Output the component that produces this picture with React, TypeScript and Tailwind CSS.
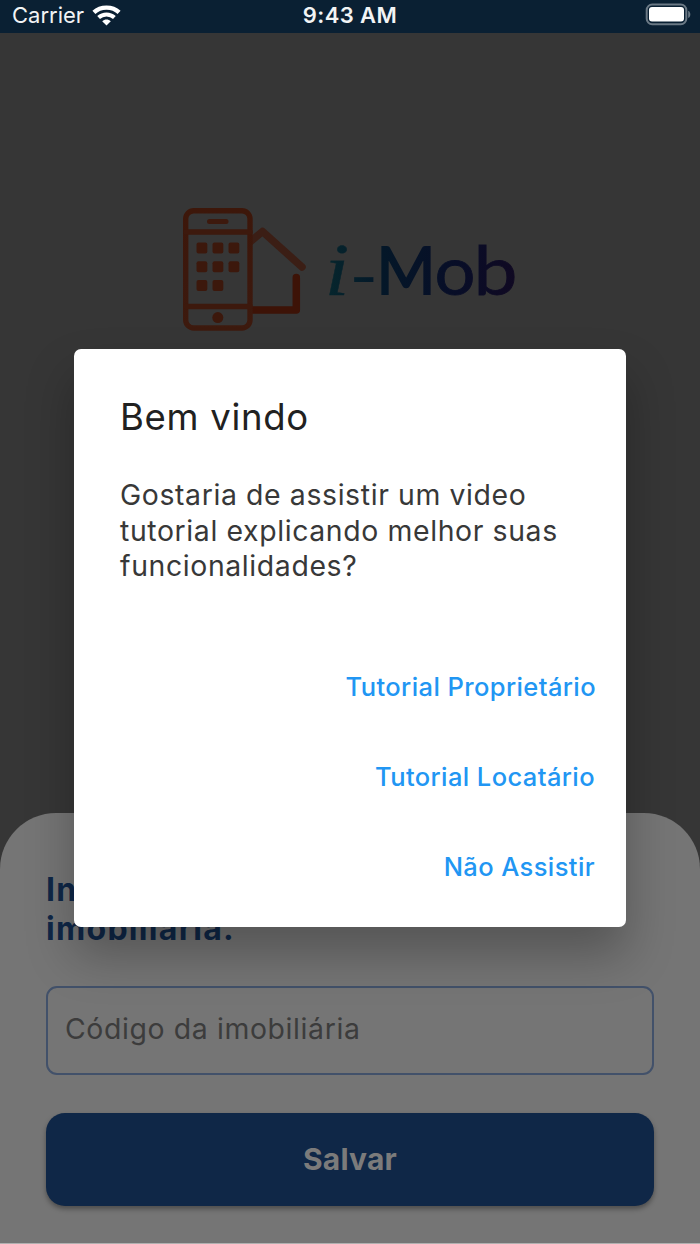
import React from "react";

function StatusBar() {
  return (
    <header className="grid h-[33px] shrink-0 grid-cols-3 items-center bg-[#0a2033] text-[#f2f4f5]">
      <div className="flex items-center pl-3">
        <span className="mb-[3px] w-[72px] whitespace-nowrap text-[22px] leading-[30px]">Carrier</span>
        <svg className="ml-2 mb-1" width="29" height="22" viewBox="0 0 29 22" fill="none" stroke="#fff">
          <path d="M1.9 8.4C8.6 1.9 20.4 1.9 27.1 8.4" strokeWidth="4.3" />
          <path d="M6.6 13.5C11 9.4 18 9.4 22.4 13.5" strokeWidth="4" />
          <path d="M10.2 17.3C12.8 15 16.2 15 18.8 17.3L14.5 21.6Z" fill="#fff" stroke="none" />
        </svg>
      </div>
      <div className="mb-[3px] whitespace-nowrap text-center text-[22px] font-semibold leading-[30px] tracking-[0.4px]">9:43 AM</div>
      <div className="flex justify-end pr-[9px]">
        <svg className="mb-[5px]" width="46" height="23" viewBox="0 0 46 23">
          <rect x="1.7" y="1.5" width="39.6" height="19.7" rx="5.5" fill="none" stroke="#6b7985" strokeWidth="2" />
          <rect x="4" y="4" width="35" height="14.5" rx="3" fill="#fff" />
          <path d="M43.2 7.7C46 8.7 46 14 43.2 15Z" fill="#6b7985" />
        </svg>
      </div>
    </header>
  );
}

function Logo() {
  return (
    <svg width="360" height="150" viewBox="170 195 360 150" role="img">
      <defs>
        <linearGradient id="orange" gradientUnits="userSpaceOnUse" x1="0" y1="208" x2="0" y2="331">
          <stop offset="0" stopColor="#3d170a" />
          <stop offset="0.55" stopColor="#3c180d" />
          <stop offset="1" stopColor="#3d1a0e" />
        </linearGradient>
        <linearGradient id="word" gradientUnits="userSpaceOnUse" x1="326" y1="0" x2="516" y2="0">
          <stop offset="0" stopColor="#06262d" />
          <stop offset="0.3" stopColor="#041728" />
          <stop offset="0.7" stopColor="#080d27" />
          <stop offset="1" stopColor="#100922" />
        </linearGradient>
      </defs>
      <g fill="none" strokeLinecap="round" strokeLinejoin="round">
        <path d="M250 242L262.5 231.5L302 267" stroke="#3b1e15" strokeWidth="7.5" />
        <path d="M252 310H296.3V277.5" stroke="#3d1307" strokeWidth="7.5" />
        <rect x="185.7" y="210.7" width="64.3" height="117.3" rx="8" fill="#363636" stroke="url(#orange)" strokeWidth="5.4" />
        <path d="M186 232H250M186 306.5H250" stroke="#3d190d" strokeWidth="5.4" />
        <path d="M209.5 221.4H226" stroke="#3d190d" strokeWidth="5" />
      </g>
      <g fill="#3c180c">
        <rect x="196.5" y="242.5" width="10.8" height="11" rx="2" />
        <rect x="212.5" y="242.5" width="10.8" height="11" rx="2" />
        <rect x="228.5" y="242.5" width="10.8" height="11" rx="2" />
        <rect x="196.5" y="261.3" width="10.8" height="11" rx="2" />
        <rect x="212.5" y="261.3" width="10.8" height="11" rx="2" />
        <rect x="228.5" y="261.3" width="10.8" height="11" rx="2" />
        <rect x="196.5" y="280" width="10.8" height="11" rx="2" />
        <rect x="212.5" y="280" width="10.8" height="11" rx="2" />
        <circle cx="217.8" cy="317.6" r="5.5" />
      </g>
      <g fill="url(#word)" stroke="url(#word)">
        <text x="324.5" y="294.5" fontSize="75" strokeWidth="0.4" fontStyle="italic" fontFamily="'Liberation Serif', serif" textLength="25" lengthAdjust="spacingAndGlyphs">i</text>
        <text x="349.3" y="298.5" fontSize="64" strokeWidth="0" fontFamily="Lato, sans-serif" textLength="29" lengthAdjust="spacingAndGlyphs">-</text>
        <text x="376.5" y="294" fontSize="66" strokeWidth="2" fontFamily="Lato, sans-serif" textLength="59" lengthAdjust="spacingAndGlyphs">M</text>
        <text x="434.5" y="294.5" fontSize="67" strokeWidth="0.8" fontFamily="Lato, sans-serif" textLength="41" lengthAdjust="spacingAndGlyphs">o</text>
        <text x="473.5" y="294.5" fontSize="67" strokeWidth="0.8" fontFamily="Lato, sans-serif" textLength="44" lengthAdjust="spacingAndGlyphs">b</text>
      </g>
    </svg>
  );
}

function CodeSheet() {
  return (
    <section className="flex h-[430px] shrink-0 flex-col rounded-t-[56px] bg-[#757575] px-[46px] pt-[57px]">
      <h2 className="h-[116px] text-[32px] font-bold leading-[39px] tracking-[1.3px] text-[#0f2747]">
        Informe o código da
        <br />
        imobiliaria.
      </h2>
      <div className="flex h-[89px] shrink-0 items-center rounded-[11px] border-2 border-[#42516a] px-[17px] pb-[3px] text-[28.4px] tracking-[0.62px] text-[#3c3c3c]">
        Código da imobiliária
      </div>
      <button className="mt-[38px] h-[93px] shrink-0 rounded-[19px] bg-[#0f2747] text-[30px] font-bold tracking-[0.2px] text-[#7b7b7b] shadow-[0_3px_5px_rgba(0,0,0,0.35)]">
        Salvar
      </button>
    </section>
  );
}

function WelcomeDialog() {
  return (
    <div
      role="dialog"
      className="absolute left-[74px] top-[349px] flex h-[578px] w-[552px] flex-col rounded-[7px] bg-white pl-[46px] pr-[31px] pt-[44px] shadow-[0_28px_48px_rgba(0,0,0,0.27)]"
    >
      <h1 className="h-[84px] whitespace-nowrap text-[36.5px] leading-[48px] tracking-[0.7px] text-[#212121]">Bem vindo</h1>
      <p className="h-[165px] whitespace-nowrap text-[28.4px] leading-[35.6px] tracking-[0.62px] text-[#383838]">
        Gostaria de assistir um video
        <br />
        tutorial explicando melhor suas
        <br />
        funcionalidades?
      </p>
      <div className="flex flex-col items-end text-[25.5px] font-medium leading-[88px] tracking-[0.4px] text-[#2196f3]">
        <button className="-mr-px h-[90px] whitespace-nowrap">Tutorial Proprietário</button>
        <button className="h-[90px] whitespace-nowrap">Tutorial Locatário</button>
        <button className="h-[90px] whitespace-nowrap">Não Assistir</button>
      </div>
    </div>
  );
}

export default function App() {
  return (
    <div className="relative flex h-[1244px] w-[700px] flex-col overflow-hidden bg-[#363636] font-['Inter',sans-serif]">
      <StatusBar />
      <main className="flex grow flex-col">
        <div className="flex h-[780px] shrink-0 flex-col items-center pt-[162px]">
          <Logo />
        </div>
        <CodeSheet />
        <div className="h-px bg-[#b0b0b0]" />
      </main>
      <WelcomeDialog />
    </div>
  );
}
